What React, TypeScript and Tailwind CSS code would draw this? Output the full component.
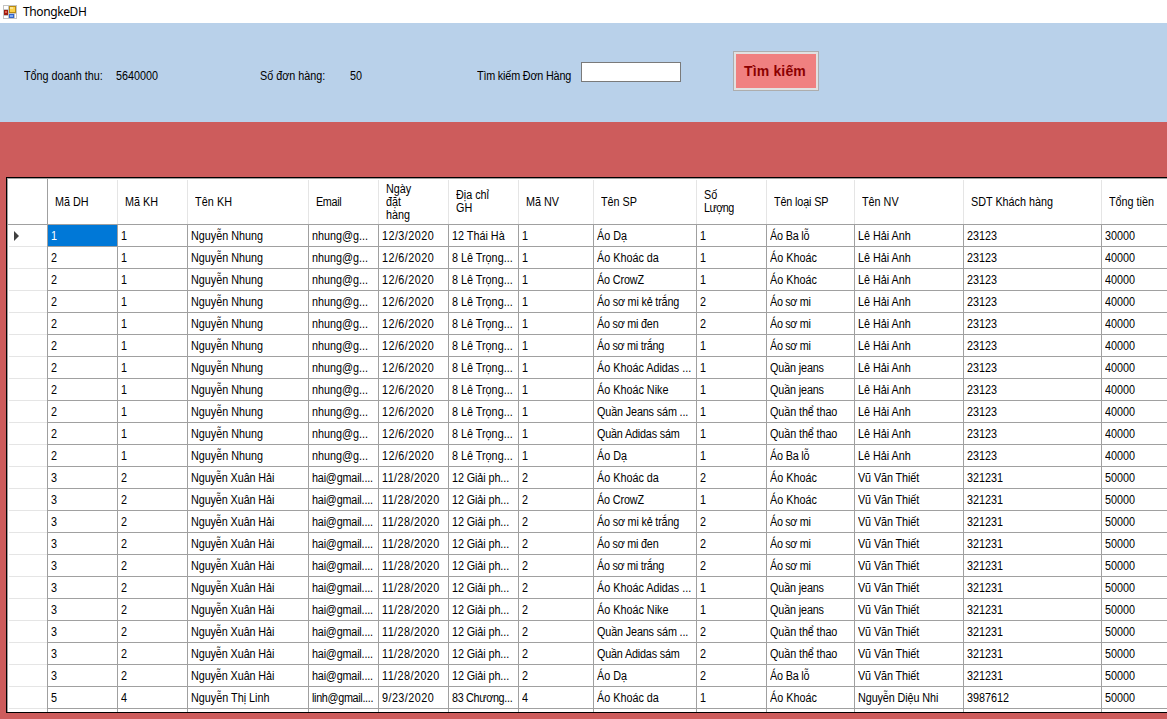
import React from "react";
import { clsx } from "clsx";

const columns = [
  { title: ["Mã DH"], width: "w-[70px]" },
  { title: ["Mã KH"], width: "w-[70px]" },
  { title: ["Tên KH"], width: "w-[121px]" },
  { title: ["Email"], width: "w-[70px]" },
  { title: ["Ngày", "đặt", "hàng"], width: "w-[70px]" },
  { title: ["Địa chỉ", "GH"], width: "w-[70px]" },
  { title: ["Mã NV"], width: "w-[75px]" },
  { title: ["Tên SP"], width: "w-[103px]" },
  { title: ["Số", "Lượng"], width: "w-[70px]" },
  { title: ["Tên loại SP"], width: "w-[88px]" },
  { title: ["Tên NV"], width: "w-[109px]" },
  { title: ["SDT Khách hàng"], width: "w-[138px]" },
  { title: ["Tổng tiền"], width: "w-[100px]" },
];

const first = ["2", "1", "Nguyễn Nhung", "nhung@g...", "12/6/2020", "8 Lê Trọng...", "1"];
const firstEnd = ["Lê Hải Anh", "23123", "40000"];
const second = ["3", "2", "Nguyễn Xuân Hải", "hai@gmail....", "11/28/2020", "12 Giải ph...", "2"];
const secondEnd = ["Vũ Văn Thiết", "321231", "50000"];

const products = [
  ["Áo Khoác da", "1", "2", "Áo Khoác"],
  ["Áo CrowZ", "1", "1", "Áo Khoác"],
  ["Áo sơ mi kẻ trắng", "2", "2", "Áo sơ mi"],
  ["Áo sơ mi đen", "2", "2", "Áo sơ mi"],
  ["Áo sơ mi trắng", "1", "2", "Áo sơ mi"],
  ["Áo Khoác Adidas ...", "1", "1", "Quần jeans"],
  ["Áo Khoác Nike", "1", "1", "Quần jeans"],
  ["Quần Jeans sám ...", "1", "2", "Quần thể thao"],
  ["Quần Adidas sám", "1", "2", "Quần thể thao"],
  ["Áo Dạ", "1", "2", "Áo Ba lỗ"],
];

const rows: string[][] = [
  ["1", "1", "Nguyễn Nhung", "nhung@g...", "12/3/2020", "12 Thái Hà", "1", "Áo Dạ", "1", "Áo Ba lỗ", "Lê Hải Anh", "23123", "30000"],
  ...products.map(([name, qty, , kind]) => [...first, name, qty, kind, ...firstEnd]),
  ...products.map(([name, , qty, kind]) => [...second, name, qty, kind, ...secondEnd]),
  ["5", "4", "Nguyễn Thị Linh", "linh@gmail....", "9/23/2020", "83 Chương...", "4", "Áo Khoác da", "1", "Áo Khoác", "Nguyễn Diệu Nhi", "3987612", "50000"],
];

const tracking: Record<string, string> = {
  "12/3/2020": "tracking-[0.5px]",
  "12/6/2020": "tracking-[0.5px]",
  "9/23/2020": "tracking-[0.5px]",
  "11/28/2020": "tracking-[0.5px]",
  "hai@gmail....": "tracking-[-0.2px]",
  "linh@gmail....": "tracking-[-0.35px]",
  "83 Chương...": "tracking-[-0.35px]",
  "12 Giải ph...": "tracking-[-0.1px]",
  "Áo sơ mi kẻ trắng": "tracking-[-0.2px]",
  "Áo sơ mi đen": "tracking-[-0.25px]",
  "Áo sơ mi trắng": "tracking-[-0.3px]",
  "Áo sơ mi": "tracking-[-0.35px]",
  "Áo Ba lỗ": "tracking-[-0.2px]",
  "Áo CrowZ": "tracking-[-0.15px]",
  "Quần Jeans sám ...": "tracking-[-0.15px]",
  "Quần Adidas sám": "tracking-[-0.2px]",
  "Quần jeans": "tracking-[-0.15px]",
  "Quần thể thao": "tracking-[-0.1px]",
  "Nguyễn Xuân Hải": "tracking-[-0.1px]",
  "Nguyễn Diệu Nhi": "tracking-[-0.1px]",
  "Vũ Văn Thiết": "tracking-[-0.1px]",
  "Tìm kiếm Đơn Hàng": "tracking-[-0.2px]",
  "Tên loại SP": "tracking-[-0.15px]",
  "Tên KH": "tracking-[0.1px]",
  "Lượng": "tracking-[-0.6px]",
  "Email": "tracking-[-0.4px]",
};

function Label({ children }: { children: string }) {
  return (
    <span className={clsx("inline-block origin-left scale-x-90 whitespace-pre", tracking[children])}>{children}</span>
  );
}

function FormIcon() {
  return (
    <svg width="14" height="14" viewBox="0 0 14 14" shapeRendering="crispEdges">
      <path fill="#c3c3c3" d="M0 0h14v14H0z" />
      <path fill="#fff" d="M1 1h4v3H1zM1 11h4v2H1zM12 9h1v4h-1z" />
      <path fill="#a01c10" d="M1 5h4v5H1z" />
      <path fill="#e0604c" d="M2 6h2v2H2z" />
      <path fill="#b98a10" d="M6 1h7v7H6z" />
      <path fill="#fbd04a" d="M7 2h5v5H7z" />
      <path fill="#fde58c" d="M7 2h3v2H7z" />
      <path fill="#3565c8" d="M6 9h5v4H6z" />
      <path fill="#7eaaf4" d="M7 10h3v2H7z" />
    </svg>
  );
}

export default function App() {
  return (
    <div className="flex h-[719px] w-[1167px] flex-col overflow-hidden bg-[#cd5c5c] font-['Liberation_Sans',sans-serif] text-[12px] text-black">
      <header className="flex h-[23px] shrink-0 items-center gap-[6px] bg-white pl-[3px]">
        <FormIcon />
        <span className="font-['Noto_Sans',sans-serif] text-[12px] tracking-[-0.4px]">ThongkeDH</span>
      </header>

      <section className="flex h-[99px] shrink-0 bg-[#b9d1ea] pt-[28px]">
        <div className="w-[92px] pl-[24px] pt-[16px]"><Label>Tổng doanh thu:</Label></div>
        <div className="w-[168px] pl-[24px] pt-[16px]"><Label>5640000</Label></div>
        <div className="w-[90px] pt-[16px]"><Label>Số đơn hàng:</Label></div>
        <div className="w-[127px] pt-[16px]"><Label>50</Label></div>
        <div className="w-[104px] pt-[16px]"><Label>Tìm kiếm Đơn Hàng</Label></div>
        <input className="mt-[11px] h-[20px] w-[100px] border border-[#7a7a7a] bg-white outline-none" />
        <button className="ml-[52px] h-[40px] w-[86px] border border-[#adadad] bg-[#e1e1e1] p-[2px]">
          <span className="flex h-full items-center justify-center whitespace-nowrap bg-[#f08080] pr-[2px] text-[14px] font-bold tracking-[0.15px] text-[#8b0000]">
            Tìm kiếm
          </span>
        </button>
      </section>

      <main className="ml-[6px] mt-[55px] flex h-[536px] w-[1200px] flex-col overflow-hidden border border-black bg-white">
        <div className="flex grow flex-col border-l border-t border-[#a0a0a0]">
          <div className="flex h-[46px] shrink-0 border-b border-[#a0a0a0]">
            <div className="w-[40px] shrink-0 border-r border-[#a0a0a0]" />
            {columns.map(({ title, width }, i) => (
              <div key={i} className={clsx("mt-px flex shrink-0 flex-col justify-center border-r border-[#e5e5e5] pl-[7px] leading-[13px]", width)}>
                {title.map((line) => (
                  <Label key={line}>{line}</Label>
                ))}
              </div>
            ))}
          </div>
          {rows.map((row, r) => (
            <div key={r} className="flex h-[22px] shrink-0">
              <div className="flex w-[40px] shrink-0 border-r border-[#a0a0a0] pl-px">
                <div className="flex grow items-center border-b border-[#e5e5e5] pl-[5px]">
                  {r === 0 && (
                    <svg width="5" height="10" viewBox="0 0 5 10">
                      <path d="M0 0 5 5 0 10Z" fill="#404040" />
                    </svg>
                  )}
                </div>
              </div>
              {row.map((cell, c) => (
                <div
                  key={c}
                  className={clsx(
                    "flex shrink-0 items-center border-b border-r border-[#a0a0a0] pl-[3px]",
                    columns[c].width,
                    r === 0 && c === 0 && "bg-[#0078d7] text-white",
                  )}
                >
                  <Label>{cell}</Label>
                </div>
              ))}
            </div>
          ))}
          <div className="flex grow">
            <div className="w-[40px] shrink-0 border-r border-[#a0a0a0]" />
            {columns.map(({ width }, i) => (
              <div key={i} className={clsx("shrink-0 border-r border-[#a0a0a0]", width)} />
            ))}
          </div>
        </div>
      </main>
    </div>
  );
}
